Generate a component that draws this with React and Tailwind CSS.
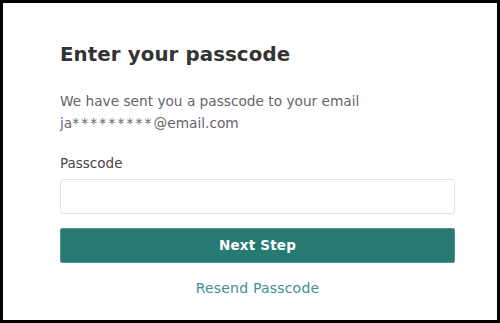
import { useState } from 'react'

const font = { fontFamily: '"DejaVu Sans", "Open Sans", sans-serif' }

export default function App() {
  const [code, setCode] = useState('')

  return (
    <div className="w-[500px] h-[323px] bg-white border-[3px] border-black box-border" style={font}>
      <div className="flex flex-col pl-[57px] pr-[42px] pt-[38px]">
        <h1 className="text-[19.8px] leading-[28px] font-bold text-[#333333] tracking-[0.1px]">
          Enter your passcode
        </h1>
        <p className="mt-[21px] text-[13.7px] leading-[22px] text-[#66626e]">
          We have sent you a passcode to your email
          <br />
          ja<span className="tracking-[2.2px]">*********</span>@email.com
        </p>
        <label className="mt-[19px] text-[13.5px] leading-[20px] text-[#444444]">Passcode</label>
        <input
          value={code}
          onChange={(e) => setCode(e.target.value)}
          className="mt-[6px] h-[35px] w-full rounded-[3px] border border-[#e2e2e2] px-3 outline-none"
        />
        <button className="mt-[14px] h-[35px] w-full rounded-[2px] bg-[#277a72] border border-[#4f958e] text-white text-[13.5px] font-bold tracking-[0.2px]">
          Next Step
        </button>
        <a href="#" className="mt-[15px] self-center text-[14px] text-[#3f8f92] tracking-[0.2px]">
          Resend Passcode
        </a>
      </div>
    </div>
  )
}
